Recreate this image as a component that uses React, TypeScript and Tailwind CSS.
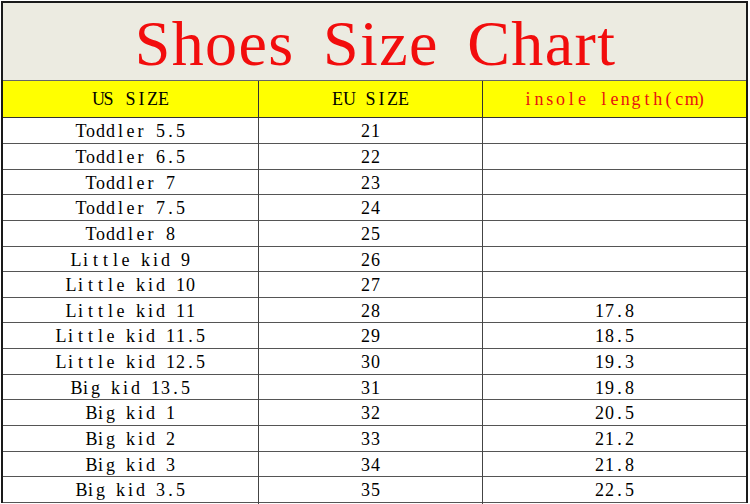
const rows = [
  { us: "Toddler 5.5", eu: "21", cm: "", tall: true },
  { us: "Toddler 6.5", eu: "22", cm: "", tall: true },
  { us: "Toddler 7", eu: "23", cm: "", tall: false },
  { us: "Toddler 7.5", eu: "24", cm: "", tall: true },
  { us: "Toddler 8", eu: "25", cm: "", tall: true },
  { us: "Little kid 9", eu: "26", cm: "", tall: false },
  { us: "Little kid 10", eu: "27", cm: "", tall: true },
  { us: "Little kid 11", eu: "28", cm: "17.8", tall: false },
  { us: "Little kid 11.5", eu: "29", cm: "18.5", tall: true },
  { us: "Little kid 12.5", eu: "30", cm: "19.3", tall: true },
  { us: "Big kid 13.5", eu: "31", cm: "19.8", tall: false },
  { us: "Big kid 1", eu: "32", cm: "20.5", tall: true },
  { us: "Big kid 2", eu: "33", cm: "21.2", tall: true },
  { us: "Big kid 3", eu: "34", cm: "21.8", tall: false },
  { us: "Big kid 3.5", eu: "35", cm: "22.5", tall: true },
];

// the chart uses a fixed-pitch serif (SimSun); fake the pitch with one box per letter
const Mono = ({ text, cell }: { text: string; cell: string }) => (
  <span className="inline-flex whitespace-pre">
    {text.split("").map((ch, i) => (
      <span key={i} className={`inline-block text-center ${cell}`}>
        {ch}
      </span>
    ))}
  </span>
);

const serif = "font-['Liberation_Serif','Noto_Sans_CJK_SC',serif]";

export default function App() {
  return (
    <div className="h-[504px] w-[750px] overflow-hidden bg-white pl-px pt-px">
      <div className={`w-[747px] border-x-2 border-t-2 border-[#1a1a1a] ${serif}`}>
        <div className="flex h-[78px] items-start justify-center border-b border-[#666] bg-[#ecebe1] pt-[9px]">
          <h1 className="pl-[2px] text-[64px] leading-none tracking-[1.4px] text-[#f20d0d] [word-spacing:11px]">
            Shoes Size Chart
          </h1>
        </div>
        <div className="grid h-[37px] grid-cols-[255px_224px_1fr] border-b border-[#333] bg-[#ffff00] text-[18px]">
          <div className="flex items-center justify-center text-black">
            <Mono text="US SIZE" cell="w-[11px]" />
          </div>
          <div className="flex items-center justify-center border-l border-[#333] text-black">
            <Mono text="EU SIZE" cell="w-[11px]" />
          </div>
          <div className="flex items-center justify-center border-l border-[#333] text-[#e81010]">
            <Mono text="insole length(cm)" cell="w-[10.8px]" />
          </div>
        </div>
        {rows.map((r) => (
          <div
            key={r.us}
            className={`grid grid-cols-[255px_224px_1fr] border-b border-[#555] text-[18px] text-black ${
              r.tall ? "h-[26px]" : "h-[25px]"
            }`}
          >
            <div className="flex items-center justify-center">
              <Mono text={r.us} cell="w-[10px]" />
            </div>
            <div className="flex items-center justify-center border-l border-[#444]">
              <Mono text={r.eu} cell="w-[10px]" />
            </div>
            <div className="flex items-center justify-center border-l border-[#444]">
              <Mono text={r.cm} cell="w-[10px]" />
            </div>
          </div>
        ))}
      </div>
    </div>
  );
}
